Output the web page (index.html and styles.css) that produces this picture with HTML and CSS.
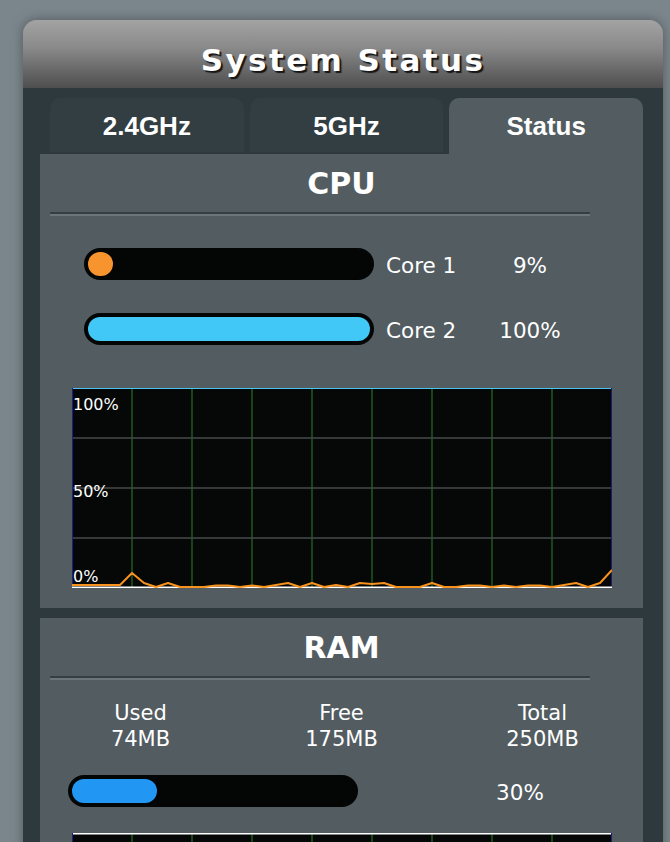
FILE: index.html
```html
<!DOCTYPE html>
<html lang="en">
<head>
<meta charset="utf-8">
<title>System Status</title>
<link rel="stylesheet" href="styles.css">
</head>
<body>
<div class="window">
  <div class="header"><h1 class="title">System Status</h1></div>
  <div class="frame">
    <div class="tabs">
      <div class="tab">2.4GHz</div>
      <div class="tab">5GHz</div>
      <div class="tab tab-active">Status</div>
    </div>

    <section class="panel">
      <h2 class="panel-title">CPU</h2>
      <div class="divider"></div>
      <div class="cores">
        <div class="core-row">
          <div class="bar"><div class="fill fill-orange" style="width:9%"></div></div>
          <span class="core-label">Core 1</span>
          <span class="core-pct">9%</span>
        </div>
        <div class="core-row">
          <div class="bar"><div class="fill fill-cyan" style="width:100%"></div></div>
          <span class="core-label">Core 2</span>
          <span class="core-pct">100%</span>
        </div>
      </div>
      <div class="chart">
        <svg class="chart-svg" width="540" height="200" viewBox="0 0 540 200">
          <rect x="0" y="0" width="540" height="200" fill="#050807"/>
          <g stroke="#1e5a1e" stroke-width="1.5">
            <line x1="60" y1="0" x2="60" y2="200"/>
            <line x1="120" y1="0" x2="120" y2="200"/>
            <line x1="180" y1="0" x2="180" y2="200"/>
            <line x1="240" y1="0" x2="240" y2="200"/>
            <line x1="300" y1="0" x2="300" y2="200"/>
            <line x1="360" y1="0" x2="360" y2="200"/>
            <line x1="420" y1="0" x2="420" y2="200"/>
            <line x1="480" y1="0" x2="480" y2="200"/>
          </g>
          <g stroke="#464a4a" stroke-width="1.5">
            <line x1="0" y1="50" x2="540" y2="50"/>
            <line x1="0" y1="100" x2="540" y2="100"/>
            <line x1="0" y1="150" x2="540" y2="150"/>
          </g>
          <line x1="0" y1="0.5" x2="540" y2="0.5" stroke="#4cc3f2" stroke-width="1"/>
          <line x1="0.5" y1="0" x2="0.5" y2="200" stroke="#1b1f8a" stroke-width="1"/>
          <line x1="539.5" y1="0" x2="539.5" y2="200" stroke="#1b1f6a" stroke-width="1"/>
          <line x1="0" y1="199.2" x2="540" y2="199.2" stroke="#ffffff" stroke-width="1.6"/>
          <polyline fill="none" stroke="#f7921e" stroke-width="2" stroke-linejoin="round"
            points="0,197 12,197 24,197 36,197 48,197 60,185 72,195 84,199 96,195 108,199 120,199 132,199 144,197.5 156,197.5 168,199 180,197.5 192,199 204,197 216,195 228,199 240,195 252,199 264,197 276,199 288,195 300,196 312,195 324,199 336,199 348,199 360,195 372,199 384,199 396,197.5 408,197.5 420,199 432,197.5 444,199 456,197.5 468,197.5 480,199 492,197 504,195 516,199 528,195 540,182"/>
        </svg>
        <span class="chart-label label-100">100%</span>
        <span class="chart-label label-50">50%</span>
        <span class="chart-label label-0">0%</span>
      </div>
    </section>

    <section class="panel panel-ram">
      <h2 class="panel-title">RAM</h2>
      <div class="divider"></div>
      <div class="stats">
        <div class="stat"><div>Used</div><div>74MB</div></div>
        <div class="stat"><div>Free</div><div>175MB</div></div>
        <div class="stat"><div>Total</div><div>250MB</div></div>
      </div>
      <div class="ram-row">
        <div class="bar"><div class="fill fill-blue" style="width:30%"></div></div>
        <span class="ram-pct">30%</span>
      </div>
      <div class="chart chart-ram">
        <svg class="chart-svg" width="540" height="200" viewBox="0 0 540 200">
          <rect x="0" y="0" width="540" height="200" fill="#050807"/>
          <g stroke="#1e5a1e" stroke-width="1.5">
            <line x1="60" y1="0" x2="60" y2="200"/>
            <line x1="120" y1="0" x2="120" y2="200"/>
            <line x1="180" y1="0" x2="180" y2="200"/>
            <line x1="240" y1="0" x2="240" y2="200"/>
            <line x1="300" y1="0" x2="300" y2="200"/>
            <line x1="360" y1="0" x2="360" y2="200"/>
            <line x1="420" y1="0" x2="420" y2="200"/>
            <line x1="480" y1="0" x2="480" y2="200"/>
          </g>
          <g stroke="#464a4a" stroke-width="1.5">
            <line x1="0" y1="50" x2="540" y2="50"/>
            <line x1="0" y1="100" x2="540" y2="100"/>
            <line x1="0" y1="150" x2="540" y2="150"/>
          </g>
          <line x1="0" y1="0.8" x2="540" y2="0.8" stroke="#ffffff" stroke-width="1.6"/>
          <line x1="0.5" y1="0" x2="0.5" y2="200" stroke="#1b1f8a" stroke-width="1"/>
          <line x1="539.5" y1="0" x2="539.5" y2="200" stroke="#1b1f6a" stroke-width="1"/>
        </svg>
      </div>
    </section>
  </div>
</div>
</body>
</html>
```

FILE: styles.css
```css
html, body {
  margin: 0;
  padding: 0;
}

body {
  background: #7b868c;
  font-family: "DejaVu Sans", Verdana, sans-serif;
  color: #ffffff;
  overflow: hidden;
  height: 842px;
}

.window {
  margin: 20px 7px 0 23px;
  width: 640px;
  border-radius: 14px 14px 0 0;
  box-shadow: 0 0 12px rgba(0, 0, 0, 0.35);
}

.header {
  box-sizing: border-box;
  height: 68px;
  padding-top: 22px;
  border-radius: 14px 14px 0 0;
  background: linear-gradient(to bottom, #a3a3a3 0%, #8a8a8a 40%, #4e4e4e 100%);
}

.title {
  margin: 0;
  font-family: "DejaVu Sans", Verdana, sans-serif;
  font-weight: bold;
  font-size: 31px;
  line-height: 36px;
  letter-spacing: 2.4px;
  text-align: center;
  color: #ffffff;
  text-shadow: 2px 2px 1px #161616;
}

.frame {
  background: #2e393e;
  padding: 10px 20px 0 17px;
  min-height: 900px;
}

.tabs {
  margin-left: 10px;
  display: grid;
  grid-template-columns: 1fr 1fr 1fr;
  column-gap: 6px;
  align-items: start;
  height: 56px;
}

.tab {
  height: 54px;
  border-radius: 10px 10px 0 0;
  background: #333e43;
  font-family: "Liberation Sans", Arial, sans-serif;
  font-weight: bold;
  font-size: 26px;
  line-height: 56px;
  text-align: center;
  color: #ffffff;
}

.tab-active {
  height: 56px;
  background: #525c61;
}

.panel {
  background: #525c61;
  padding: 12px 0 20px 0;
}

.panel-ram {
  margin-top: 10px;
}

.panel-title {
  margin: 0;
  font-family: "DejaVu Sans", Verdana, sans-serif;
  font-weight: bold;
  font-size: 30px;
  line-height: 36px;
  text-align: center;
  color: #ffffff;
}

.divider {
  margin: 10px 0 0 10px;
  width: 540px;
  height: 0;
  border-top: 2px solid #363e42;
  border-bottom: 2px solid #6b767c;
}

.cores {
  margin-top: 32px;
  display: flex;
  flex-direction: column;
  row-gap: 33px;
}

.core-row {
  display: flex;
  align-items: center;
  padding-left: 44px;
}

.bar {
  box-sizing: border-box;
  width: 290px;
  height: 32px;
  padding: 4px;
  border-radius: 16px;
  background: #040605;
}

.fill {
  height: 24px;
  min-width: 25px;
  border-radius: 12px;
}

.fill-orange {
  background: #f7942e;
}

.fill-cyan {
  background: #42c8f6;
}

.fill-blue {
  background: #2196f3;
}

.core-label {
  margin-left: 12px;
  width: 96px;
  padding-top: 3px;
  font-size: 21.5px;
  line-height: 26px;
}

.core-pct {
  width: 96px;
  padding-top: 3px;
  text-align: center;
  font-size: 21.5px;
  line-height: 26px;
}

.chart {
  position: relative;
  margin: 43px 0 0 32px;
  width: 540px;
  height: 200px;
}

.chart-svg {
  display: block;
}

.chart-label {
  position: absolute;
  left: 1px;
  font-size: 16px;
  line-height: 18px;
  color: #ffffff;
}

.label-100 { top: 8px; }
.label-50 { top: 95px; }
.label-0 { top: 180px; }

.stats {
  margin-top: 20px;
  display: grid;
  grid-template-columns: 1fr 1fr 1fr;
  text-align: center;
  font-size: 21px;
  line-height: 26px;
}

.ram-row {
  margin-top: 23px;
  display: flex;
  align-items: center;
  padding-left: 28px;
}

.ram-pct {
  margin-left: 112px;
  width: 100px;
  padding-top: 3px;
  text-align: center;
  font-size: 21.5px;
  line-height: 26px;
}

.chart-ram {
  margin-top: 26px;
}
```
